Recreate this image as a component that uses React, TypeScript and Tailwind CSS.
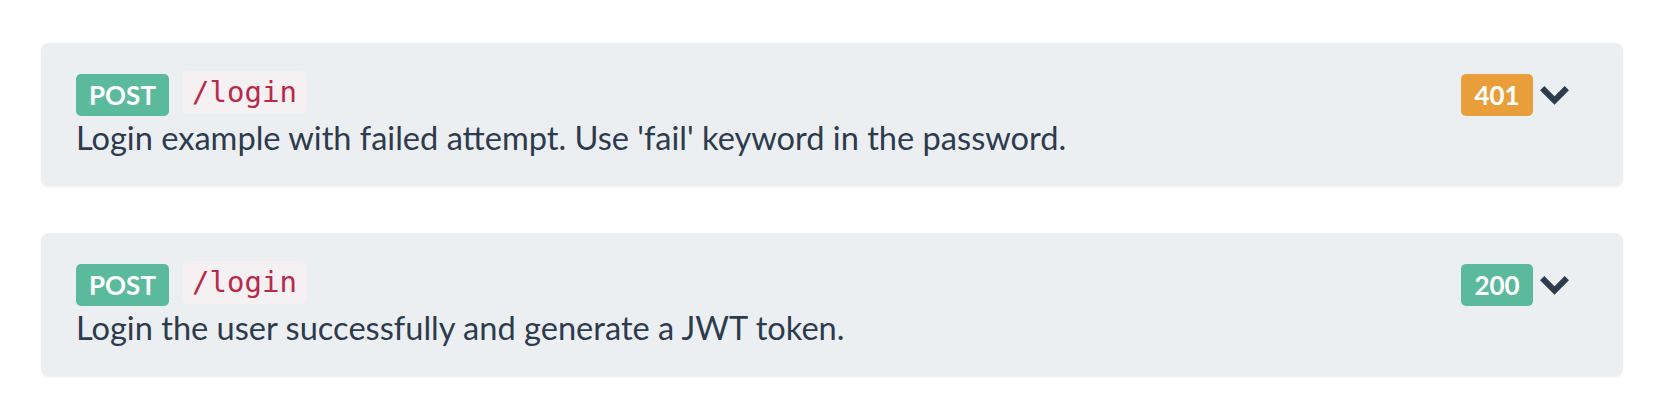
import React from "react";

function Chevron() {
  return (
    <svg width="31" height="21" viewBox="0 0 31 21" className="block">
      <polyline points="3.2,3.2 15.5,15.5 27.8,3.2" fill="none" stroke="#2d3b4e" strokeWidth="6" strokeLinecap="butt" strokeLinejoin="miter" />
    </svg>
  );
}

function Card({ status, statusBg, desc }: { status: string; statusBg: string; desc: string }) {
  return (
    <div className="flex justify-between items-start rounded-[8px] bg-[#eceff1] pl-[35px] pr-[53px] pt-[28px] pb-[29px] shadow-[0_1px_2px_rgba(0,0,0,0.08)]">
      <div className="flex flex-col">
        <div className="flex items-start gap-[13px]">
          <span className="mt-[3px] flex h-[42px] w-[93px] justify-center items-center rounded-[5px] bg-[#5bba9c] text-[26px] font-bold text-white" style={{ fontFamily: "Lato, sans-serif" }}>
            POST
          </span>
          <span className="flex h-[43px] w-[125px] justify-center items-center rounded-[6px] bg-[#f5f0f2] text-[29px] text-[#b8294a]" style={{ fontFamily: "'DejaVu Sans Mono', monospace" }}>
            /login
          </span>
        </div>
        <div className="mt-[3px] text-[32.6px] leading-[38px] text-[#2d3b4e]" style={{ fontFamily: "Lato, sans-serif" }}>
          {desc}
        </div>
      </div>
      <div className="mt-[3px] flex items-center gap-[6px]">
        <span className={`flex h-[42px] w-[72px] justify-center items-center rounded-[5px] text-[26px] font-bold text-white ${statusBg}`} style={{ fontFamily: "Lato, sans-serif" }}>
          {status}
        </span>
        <Chevron />
      </div>
    </div>
  );
}

export default function App() {
  return (
    <div className="w-[1664px] h-[414px] bg-white px-[41px] pt-[43px] flex flex-col gap-[47px]">
      <Card status="401" statusBg="bg-[#e89f3b]" desc="Login example with failed attempt. Use 'fail' keyword in the password." />
      <Card status="200" statusBg="bg-[#5bba9c]" desc="Login the user successfully and generate a JWT token." />
    </div>
  );
}
